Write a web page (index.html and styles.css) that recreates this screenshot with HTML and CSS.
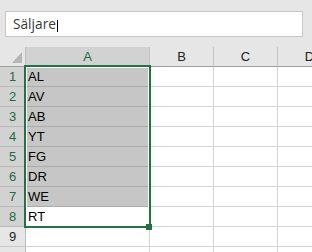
FILE: index.html
```html
<!DOCTYPE html>
<html lang="sv">
<head>
  <meta charset="UTF-8" />
  <title>Säljare</title>
  <link rel="stylesheet" href="styles.css">
</head>
<body>

<!-- formelfält -->
<div class="formula">
  <div class="formula-input"><span>Säljare</span><span class="caret"></span></div>
</div>

<!-- kalkylblad -->
<div class="sheet">
  <div class="corner"><span class="tri"></span></div>
  <div class="ch sel">A</div>
  <div class="ch">B</div>
  <div class="ch">C</div>
  <div class="ch">D</div>

  <div class="rh sel">1</div><div class="cell sel">AL</div><div class="cell"></div><div class="cell"></div><div class="cell"></div>
  <div class="rh sel">2</div><div class="cell sel">AV</div><div class="cell"></div><div class="cell"></div><div class="cell"></div>
  <div class="rh sel">3</div><div class="cell sel">AB</div><div class="cell"></div><div class="cell"></div><div class="cell"></div>
  <div class="rh sel">4</div><div class="cell sel">YT</div><div class="cell"></div><div class="cell"></div><div class="cell"></div>
  <div class="rh sel">5</div><div class="cell sel">FG</div><div class="cell"></div><div class="cell"></div><div class="cell"></div>
  <div class="rh sel">6</div><div class="cell sel">DR</div><div class="cell"></div><div class="cell"></div><div class="cell"></div>
  <div class="rh sel">7</div><div class="cell sel">WE</div><div class="cell"></div><div class="cell"></div><div class="cell"></div>
  <div class="rh sel">8</div><div class="cell">RT</div><div class="cell"></div><div class="cell"></div><div class="cell"></div>
  <div class="rh">9</div><div class="cell"></div><div class="cell"></div><div class="cell"></div><div class="cell"></div>
  <div class="rh"></div><div class="cell"></div><div class="cell"></div><div class="cell"></div><div class="cell"></div>

  <!-- markering A1:A8 -->
  <div class="selection"></div>
  <div class="handle"></div>
</div>

</body>
</html>
```

FILE: styles.css
```css
html, body {
  margin: 0;
  padding: 0;
  overflow: hidden;
  background: #e6e6e6;
  box-sizing: border-box;
}
*, *::before, *::after {
  box-sizing: inherit;
}
.formula {
  padding: 11px 0 0 5px;
  height: 47px;
}
.formula-input {
  width: 298px;
  height: 26px;
  border: 1px solid #c6c6c6;
  background: #fff;
  padding-left: 7px;
  font-family: "Open Sans", sans-serif;
  font-size: 13.7px;
  line-height: 24px;
  color: #3a3a3a;
}
.caret {
  display: inline-block;
  width: 1px;
  height: 12px;
  margin-left: 1px;
  background: #000;
  vertical-align: -3px;
}
.sheet {
  position: relative;
  display: grid;
  grid-template-columns: 26px 124px 64px 64px 64px;
  grid-auto-rows: 20px;
  font-family: "Liberation Sans", Arial, sans-serif;
  font-size: 13px;
  line-height: 19px;
  color: #000;
}
.corner {
  position: relative;
  border-right: 1px solid #bdbdbd;
  border-bottom: 1px solid #9f9f9f;
}
.tri {
  position: absolute;
  right: 3px;
  bottom: 3px;
  width: 0;
  height: 0;
  border-left: 10px solid transparent;
  border-bottom: 11px solid #b6b6b6;
}
.ch {
  text-align: center;
  border-right: 1px solid #c4c4c4;
  border-bottom: 1px solid #9f9f9f;
  color: #222;
}
.ch.sel {
  background: #d2d2d2;
  color: #1e6b40;
}
.rh {
  text-align: center;
  background: #e6e6e6;
  border-right: 1px solid #bdbdbd;
  border-bottom: 1px solid #c8c8c8;
  color: #222;
}
.rh.sel {
  background: #d2d2d2;
  border-bottom-color: #b9b9b9;
  color: #1e6b40;
}
.cell {
  background: #fff;
  border-right: 1px solid #d4d4d4;
  border-bottom: 1px solid #d4d4d4;
  padding-left: 2px;
}
.cell.sel {
  background: #c6c6c6;
  border-bottom-color: #ababab;
}
.selection {
  position: absolute;
  left: 24px;
  top: 18px;
  width: 127px;
  height: 163px;
  border: 2px solid #217346;
  box-shadow: inset 0 0 0 1px #fff;
  pointer-events: none;
}
.handle {
  position: absolute;
  left: 146px;
  top: 177px;
  width: 6px;
  height: 6px;
  background: #217346;
}
```
